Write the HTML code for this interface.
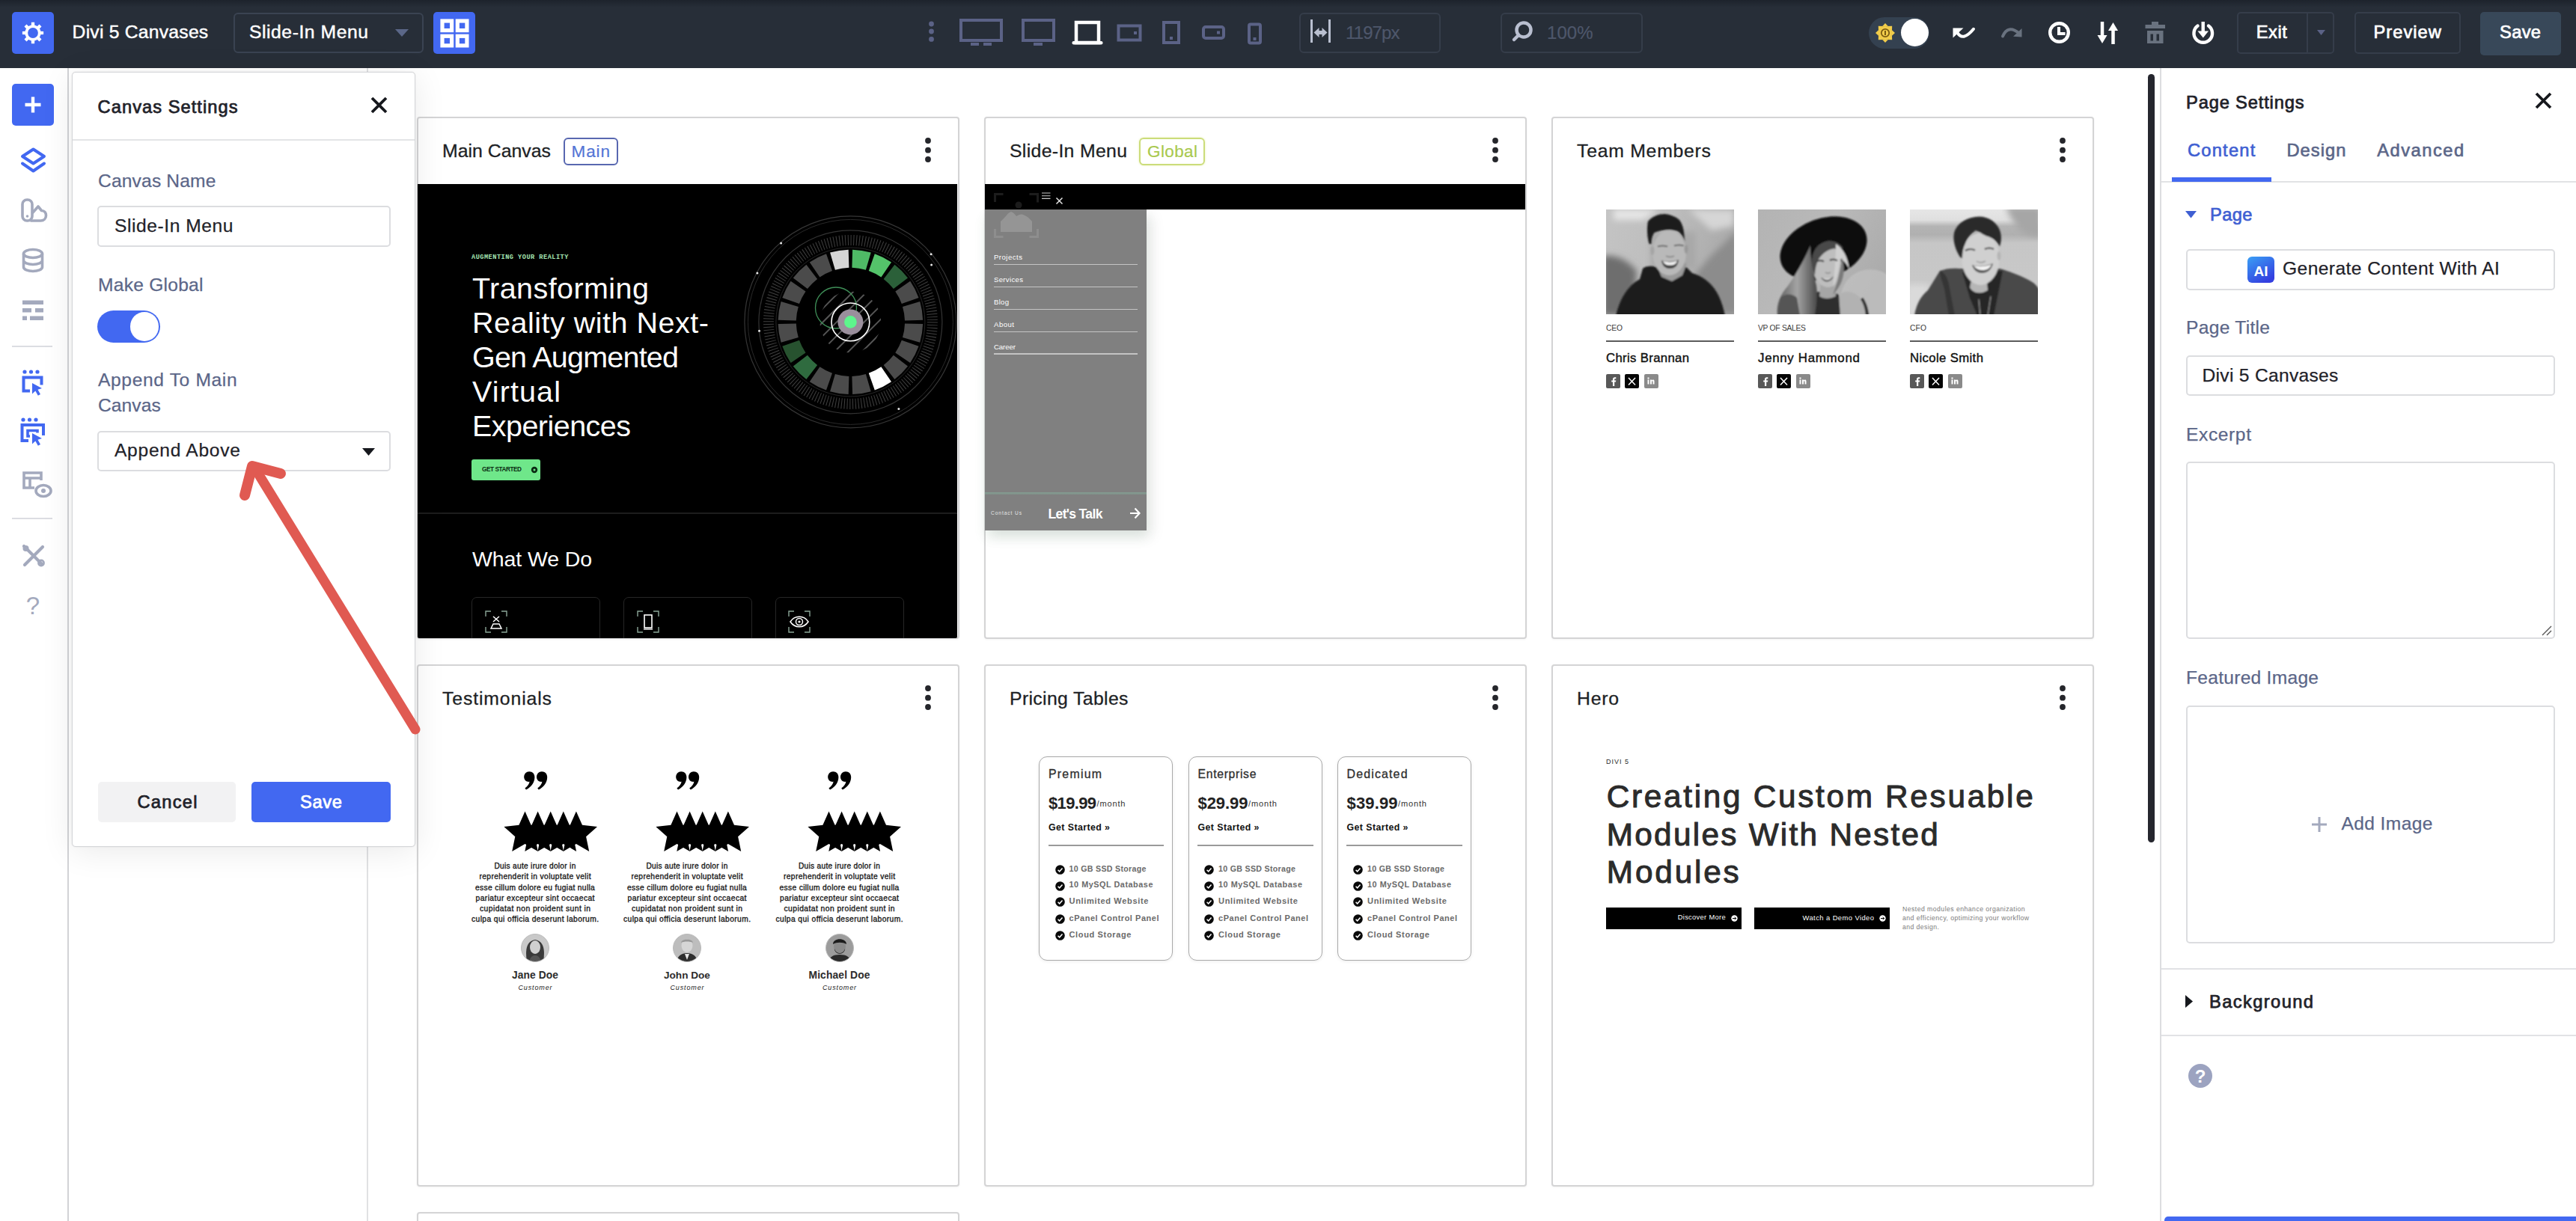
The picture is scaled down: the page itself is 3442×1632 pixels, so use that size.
<!DOCTYPE html>
<html><head><meta charset="utf-8"><title>Divi 5 Canvases</title>
<style>
html,body{margin:0;padding:0;background:#fff;}
body{width:3442px;height:1632px;overflow:hidden;position:relative;font-family:"Liberation Sans",sans-serif;}
.t{position:absolute;white-space:nowrap;line-height:1;}
svg{display:block;overflow:visible;}
</style></head><body>
<!-- p_top -->
<div style="position:absolute;left:0px;top:0px;width:3442px;height:91px;background:#272e38;"></div>
<div style="position:absolute;left:0px;top:0px;width:3442px;height:10px;background:linear-gradient(#1d232c,#272e38);"></div>
<div style="position:absolute;left:16px;top:16px;width:56px;height:56px;background:#4268f1;border-radius:5px;"><svg style="position:absolute;left:0px;top:0px;" width="56" height="56" viewBox="0 0 56 56"><g transform="translate(28,28)"><circle r="10.6" fill="#fff"/><path fill="#fff" fill-rule="evenodd" d="M-2.25,-10.15L-2.11,-14.14L2.11,-14.14L2.25,-10.15L5.59,-8.77L8.51,-11.50L11.50,-8.51L8.77,-5.59L10.15,-2.25L14.14,-2.11L14.14,2.11L10.15,2.25L8.77,5.59L11.50,8.51L8.51,11.50L5.59,8.77L2.25,10.15L2.11,14.14L-2.11,14.14L-2.25,10.15L-5.59,8.77L-8.51,11.50L-11.50,8.51L-8.77,5.59L-10.15,2.25L-14.14,2.11L-14.14,-2.11L-10.15,-2.25L-8.77,-5.59L-11.50,-8.51L-8.51,-11.50L-5.59,-8.77z M0,-6.9a6.9,6.9 0 1 0 0.01,0z"/><circle r="6.9" fill="#4268f1"/></g></svg></div>
<span class="t" style="left:96.6px;top:30.6px;font-size:24.70px;color:#fff;letter-spacing:0.23px;-webkit-text-stroke:0.45px #fff;">Divi 5 Canvases</span>
<div style="position:absolute;left:312px;top:17px;width:254px;height:54px;box-sizing:border-box;border:2px solid #3a4352;border-radius:6px;"></div>
<span class="t" style="left:333.0px;top:30.6px;font-size:24.70px;color:#fff;letter-spacing:0.55px;-webkit-text-stroke:0.45px #fff;">Slide-In Menu</span>
<svg style="position:absolute;left:526px;top:37px;" width="22" height="14" viewBox="0 0 22 14"><path d="M2,2h18l-9,10z" fill="#5b6788"/></svg>
<div style="position:absolute;left:579px;top:16px;width:56px;height:56px;background:#4268f1;border-radius:5px;"><svg style="position:absolute;left:0px;top:0px;" width="56" height="56" viewBox="0 0 56 56"><rect x="12.0" y="12.0" width="12.6" height="12.6" fill="none" stroke="#fff" stroke-width="5.2"/><rect x="32.300000000000004" y="12.0" width="12.6" height="12.6" fill="none" stroke="#fff" stroke-width="5.2"/><rect x="12.0" y="32.300000000000004" width="12.6" height="12.6" fill="none" stroke="#fff" stroke-width="5.2"/><rect x="32.300000000000004" y="32.300000000000004" width="12.6" height="12.6" fill="none" stroke="#fff" stroke-width="5.2"/></svg></div>
<svg style="position:absolute;left:1238px;top:26px;" width="14" height="34" viewBox="0 0 14 34"><circle cx="6.5" cy="6" r="3.4" fill="#5b6286"/><circle cx="6.5" cy="16" r="3.4" fill="#5b6286"/><circle cx="6.5" cy="26.4" r="3.4" fill="#5b6286"/></svg>
<svg style="position:absolute;left:1280px;top:22px;" width="62" height="42" viewBox="0 0 62 42"><rect x="4" y="5" width="54" height="27" fill="none" stroke="#5b6286" stroke-width="4"/><rect x="17" y="35" width="11" height="4" fill="#5b6286"/><rect x="34" y="35" width="11" height="4" fill="#5b6286"/></svg>
<svg style="position:absolute;left:1363px;top:22px;" width="50" height="42" viewBox="0 0 50 42"><rect x="4" y="5" width="41" height="27" fill="none" stroke="#5b6286" stroke-width="4"/><rect x="18" y="35" width="12" height="4" fill="#5b6286"/></svg>
<svg style="position:absolute;left:1430px;top:24px;" width="46" height="38" viewBox="0 0 46 38"><rect x="8" y="6" width="30" height="27" fill="none" stroke="#fff" stroke-width="4.5"/><rect x="2.5" y="31" width="41" height="4.5" rx="2" fill="#fff"/></svg>
<svg style="position:absolute;left:1490px;top:30px;" width="40" height="28" viewBox="0 0 40 28"><rect x="4.5" y="4.5" width="29" height="19" fill="none" stroke="#5b6286" stroke-width="4"/><rect x="25" y="12" width="4" height="4" fill="#5b6286"/></svg>
<svg style="position:absolute;left:1550px;top:26px;" width="32" height="36" viewBox="0 0 32 36"><rect x="5" y="4" width="20" height="27" fill="none" stroke="#5b6286" stroke-width="4"/><rect x="13" y="23" width="4" height="4" fill="#5b6286"/></svg>
<svg style="position:absolute;left:1603px;top:31px;" width="38" height="26" viewBox="0 0 38 26"><rect x="5" y="5" width="27" height="15" rx="3" fill="none" stroke="#5b6286" stroke-width="4"/><rect x="23" y="10.5" width="4" height="4" fill="#5b6286"/></svg>
<svg style="position:absolute;left:1663px;top:28px;" width="28" height="34" viewBox="0 0 28 34"><rect x="6" y="4.5" width="15" height="25" rx="2" fill="none" stroke="#5b6286" stroke-width="4"/><rect x="11.5" y="22" width="4" height="4" fill="#5b6286"/></svg>
<div style="position:absolute;left:1736px;top:17px;width:189px;height:54px;box-sizing:border-box;border:2px solid #353d4a;border-radius:6px;"></div>
<svg style="position:absolute;left:1749px;top:28px;" width="32" height="32" viewBox="0 0 32 32"><rect x="2" y="-2" width="3" height="31" fill="#b9bfd0"/><rect x="26" y="-2" width="3" height="31" fill="#b9bfd0"/><path d="M6.5,15.5l7,-6.5v4h4v-4l7,6.5l-7,6.5v-4h-4v4z" fill="#b9bfd0"/></svg>
<span class="t" style="left:1798.0px;top:31.8px;font-size:24.00px;color:#4e576b;letter-spacing:-0.89px;-webkit-text-stroke:0.2px #4e576b;">1197px</span>
<div style="position:absolute;left:2005px;top:17px;width:190px;height:54px;box-sizing:border-box;border:2px solid #353d4a;border-radius:6px;"></div>
<svg style="position:absolute;left:2018px;top:26px;" width="34" height="34" viewBox="0 0 34 34"><circle cx="18" cy="14" r="9.5" fill="none" stroke="#b9bfd0" stroke-width="4.5"/><path d="M11,21l-6,6" stroke="#b9bfd0" stroke-width="4.5" stroke-linecap="round"/></svg>
<span class="t" style="left:2067.0px;top:31.8px;font-size:24.00px;color:#4e576b;letter-spacing:0.07px;-webkit-text-stroke:0.2px #4e576b;">100%</span>
<div style="position:absolute;left:2497px;top:23px;width:81px;height:42px;background:#344150;border-radius:21px;"></div>
<svg style="position:absolute;left:2506px;top:31px;" width="26" height="26" viewBox="0 0 26 26"><g transform="translate(13,13)"><path d="M-4.5,-8.2L0,-13L4.5,-8.2z" fill="#f2cd4a" transform="rotate(0)"/><path d="M-4.5,-8.2L0,-13L4.5,-8.2z" fill="#f2cd4a" transform="rotate(45)"/><path d="M-4.5,-8.2L0,-13L4.5,-8.2z" fill="#f2cd4a" transform="rotate(90)"/><path d="M-4.5,-8.2L0,-13L4.5,-8.2z" fill="#f2cd4a" transform="rotate(135)"/><path d="M-4.5,-8.2L0,-13L4.5,-8.2z" fill="#f2cd4a" transform="rotate(180)"/><path d="M-4.5,-8.2L0,-13L4.5,-8.2z" fill="#f2cd4a" transform="rotate(225)"/><path d="M-4.5,-8.2L0,-13L4.5,-8.2z" fill="#f2cd4a" transform="rotate(270)"/><path d="M-4.5,-8.2L0,-13L4.5,-8.2z" fill="#f2cd4a" transform="rotate(315)"/><circle r="9" fill="#f2cd4a"/><circle r="5.2" fill="none" stroke="#7a5b12" stroke-width="1.8"/><rect x="-1" y="-3" width="2" height="6" fill="#7a5b12"/></g></svg>
<div style="position:absolute;left:2540px;top:25px;width:37px;height:37px;background:#fff;border-radius:50%;"></div>
<svg style="position:absolute;left:2606px;top:28px;" width="36" height="30" viewBox="0 0 36 30"><path d="M3.5,9.5h14l-14,13z" fill="#fff"/><path d="M9,15Q16.5,28.5 31,10.8" fill="none" stroke="#fff" stroke-width="4" stroke-linecap="round"/></svg>
<svg style="position:absolute;left:2671px;top:30px;" width="36" height="28" viewBox="0 0 36 28"><path d="M30.5,8v11.5l-11.5,-0.8z" fill="#69727f"/><path d="M5,18.5Q12,2.5 27,14.500" fill="none" stroke="#69727f" stroke-width="4" stroke-linecap="round"/></svg>
<svg style="position:absolute;left:2734px;top:26px;" width="36" height="36" viewBox="0 0 36 36"><circle cx="17.5" cy="17.5" r="12.3" fill="none" stroke="#fff" stroke-width="4.4"/><path d="M17,10v9h8.5" fill="none" stroke="#fff" stroke-width="4"/></svg>
<svg style="position:absolute;left:2799px;top:26px;" width="36" height="36" viewBox="0 0 36 36"><path d="M10,3v20" stroke="#fff" stroke-width="4.5"/><path d="M3.5,21h13l-6.5,11z" fill="#fff"/><path d="M24.5,33v-20" stroke="#fff" stroke-width="4.5"/><path d="M18,15h13l-6.5,-11z" fill="#fff"/></svg>
<svg style="position:absolute;left:2863px;top:26px;" width="34" height="36" viewBox="0 0 34 36"><rect x="12" y="3" width="9" height="4" fill="#69727f"/><rect x="3.5" y="7" width="26.5" height="5" fill="#69727f"/><path d="M6,15h21.5v17h-21.5z M10.5,19.5v9h3.5v-9z M18.5,19.5v9h3.5v-9z" fill="#69727f" fill-rule="evenodd"/></svg>
<svg style="position:absolute;left:2926px;top:26px;" width="36" height="36" viewBox="0 0 36 36"><path d="M10.5,8.5a12.3,12.3 0 1 0 14.5,0" fill="none" stroke="#fff" stroke-width="4.4" stroke-linecap="round"/><path d="M17.7,3v15" stroke="#fff" stroke-width="4.4"/><path d="M10.5,15.5h14.5l-7.2,9z" fill="#fff"/></svg>
<div style="position:absolute;left:2989px;top:16px;width:130px;height:56px;box-sizing:border-box;border:2px solid #353d4a;border-radius:5px;"></div>
<div style="position:absolute;left:3082px;top:17px;width:2px;height:54px;background:#353d4a;"></div>
<span class="t" style="left:3014.8px;top:32.3px;font-size:23.70px;color:#fff;letter-spacing:0.50px;-webkit-text-stroke:0.7px #fff;">Exit</span>
<svg style="position:absolute;left:3094px;top:38px;" width="16" height="12" viewBox="0 0 16 12"><path d="M2,2h11l-5.5,7z" fill="#5b6286"/></svg>
<div style="position:absolute;left:3146px;top:16px;width:142px;height:56px;box-sizing:border-box;border:2px solid #353d4a;border-radius:5px;"></div>
<span class="t" style="left:3171.4px;top:32.3px;font-size:23.70px;color:#fff;letter-spacing:1.05px;-webkit-text-stroke:0.7px #fff;">Preview</span>
<div style="position:absolute;left:3314px;top:16px;width:108px;height:58px;background:#384859;border-radius:5px;"></div>
<span class="t" style="left:3340.0px;top:32.3px;font-size:23.70px;color:#fff;letter-spacing:0.33px;-webkit-text-stroke:0.7px #fff;">Save</span>
<!-- p_cards -->
<div style="position:absolute;left:556.5px;top:156.3px;width:725px;height:698.2px;box-sizing:border-box;border:2px solid #d4d4d5;border-radius:4px;background:#fff;box-shadow:0 1px 3px rgba(0,0,0,.05);"></div>
<span class="t" style="left:591.0px;top:189.9px;font-size:24.80px;color:#1d1f25;letter-spacing:0.03px;-webkit-text-stroke:0.3px #1d1f25;">Main Canvas</span>
<svg style="position:absolute;left:1234px;top:182px;" width="12" height="38" viewBox="0 0 12 38"><circle cx="6" cy="6" r="3.9" fill="#25262b"/><circle cx="6" cy="18.7" r="3.9" fill="#25262b"/><circle cx="6" cy="31" r="3.9" fill="#25262b"/></svg>
<div style="position:absolute;left:1314.5px;top:156.3px;width:725px;height:698.2px;box-sizing:border-box;border:2px solid #d4d4d5;border-radius:4px;background:#fff;box-shadow:0 1px 3px rgba(0,0,0,.05);"></div>
<span class="t" style="left:1349.0px;top:189.9px;font-size:24.80px;color:#1d1f25;letter-spacing:0.33px;-webkit-text-stroke:0.3px #1d1f25;">Slide-In Menu</span>
<svg style="position:absolute;left:1992px;top:182px;" width="12" height="38" viewBox="0 0 12 38"><circle cx="6" cy="6" r="3.9" fill="#25262b"/><circle cx="6" cy="18.7" r="3.9" fill="#25262b"/><circle cx="6" cy="31" r="3.9" fill="#25262b"/></svg>
<div style="position:absolute;left:2072.5px;top:156.3px;width:725px;height:698.2px;box-sizing:border-box;border:2px solid #d4d4d5;border-radius:4px;background:#fff;box-shadow:0 1px 3px rgba(0,0,0,.05);"></div>
<span class="t" style="left:2107.0px;top:189.9px;font-size:24.80px;color:#1d1f25;letter-spacing:0.74px;-webkit-text-stroke:0.3px #1d1f25;">Team Members</span>
<svg style="position:absolute;left:2750px;top:182px;" width="12" height="38" viewBox="0 0 12 38"><circle cx="6" cy="6" r="3.9" fill="#25262b"/><circle cx="6" cy="18.7" r="3.9" fill="#25262b"/><circle cx="6" cy="31" r="3.9" fill="#25262b"/></svg>
<div style="position:absolute;left:556.5px;top:888.3px;width:725px;height:698.2px;box-sizing:border-box;border:2px solid #d4d4d5;border-radius:4px;background:#fff;box-shadow:0 1px 3px rgba(0,0,0,.05);"></div>
<span class="t" style="left:591.0px;top:921.9px;font-size:24.80px;color:#1d1f25;letter-spacing:0.87px;-webkit-text-stroke:0.3px #1d1f25;">Testimonials</span>
<svg style="position:absolute;left:1234px;top:914px;" width="12" height="38" viewBox="0 0 12 38"><circle cx="6" cy="6" r="3.9" fill="#25262b"/><circle cx="6" cy="18.7" r="3.9" fill="#25262b"/><circle cx="6" cy="31" r="3.9" fill="#25262b"/></svg>
<div style="position:absolute;left:1314.5px;top:888.3px;width:725px;height:698.2px;box-sizing:border-box;border:2px solid #d4d4d5;border-radius:4px;background:#fff;box-shadow:0 1px 3px rgba(0,0,0,.05);"></div>
<span class="t" style="left:1349.0px;top:921.9px;font-size:24.80px;color:#1d1f25;letter-spacing:0.35px;-webkit-text-stroke:0.3px #1d1f25;">Pricing Tables</span>
<svg style="position:absolute;left:1992px;top:914px;" width="12" height="38" viewBox="0 0 12 38"><circle cx="6" cy="6" r="3.9" fill="#25262b"/><circle cx="6" cy="18.7" r="3.9" fill="#25262b"/><circle cx="6" cy="31" r="3.9" fill="#25262b"/></svg>
<div style="position:absolute;left:2072.5px;top:888.3px;width:725px;height:698.2px;box-sizing:border-box;border:2px solid #d4d4d5;border-radius:4px;background:#fff;box-shadow:0 1px 3px rgba(0,0,0,.05);"></div>
<span class="t" style="left:2107.0px;top:921.9px;font-size:24.80px;color:#1d1f25;letter-spacing:0.75px;-webkit-text-stroke:0.3px #1d1f25;">Hero</span>
<svg style="position:absolute;left:2750px;top:914px;" width="12" height="38" viewBox="0 0 12 38"><circle cx="6" cy="6" r="3.9" fill="#25262b"/><circle cx="6" cy="18.7" r="3.9" fill="#25262b"/><circle cx="6" cy="31" r="3.9" fill="#25262b"/></svg>
<div style="position:absolute;left:556.5px;top:1620.3px;width:725px;height:41.2px;box-sizing:border-box;border:2px solid #d4d4d5;border-radius:4px;background:#fff;box-shadow:0 1px 3px rgba(0,0,0,.05);"></div>
<div style="position:absolute;left:753px;top:183.5px;width:73px;height:37px;box-sizing:border-box;border:2px solid #5867b0;border-radius:6px;"></div>
<span class="t" style="left:763.5px;top:191.9px;font-size:22.50px;color:#5375d6;letter-spacing:0.91px;-webkit-text-stroke:0.2px #5375d6;">Main</span>
<div style="position:absolute;left:1522px;top:183.5px;width:88px;height:37px;box-sizing:border-box;border:2px solid #cbdc7a;border-radius:6px;box-shadow:0 0 3px #e8f0b0;"></div>
<span class="t" style="left:1533.0px;top:191.9px;font-size:22.50px;color:#a9c94e;letter-spacing:0.39px;-webkit-text-stroke:0.2px #a9c94e;">Global</span>
<div style="position:absolute;left:558px;top:246px;width:721.2px;height:606.8px;background:#000;overflow:hidden;border-radius:0 0 2px 2px;"><svg style="position:absolute;left:0px;top:0px;" width="722" height="608" viewBox="0 0 722 608"><circle cx="578.4" cy="184.4" r="141.5" fill="none" stroke="#363636" stroke-width="1.2"/><circle cx="578.4" cy="184.4" r="137" fill="none" stroke="#2a2a2a" stroke-width="1"/><circle cx="578.4" cy="184.4" r="122.5" fill="none" stroke="#343434" stroke-width="1.2"/><circle cx="578.4" cy="184.4" r="99.5" fill="none" stroke="#262626" stroke-width="1"/><circle cx="578.4" cy="184.4" r="109.5" fill="none" stroke="#404040" stroke-width="14" stroke-dasharray="1 2.82"/><path d="M581.1,87.7A96.7,96.7 0 0 1 605.7,91.6L598.9,114.8A72.6,72.6 0 0 0 580.4,111.8z" fill="#4fba66"/><path d="M610.8,93.3A96.7,96.7 0 0 1 633.0,104.6L619.4,124.5A72.6,72.6 0 0 0 602.8,116.0z" fill="#54c36a"/><path d="M637.4,107.8A96.7,96.7 0 0 1 655.0,125.4L635.9,140.1A72.6,72.6 0 0 0 622.7,126.9z" fill="#2b6039"/><path d="M658.2,129.8A96.7,96.7 0 0 1 669.5,152.0L646.8,160.0A72.6,72.6 0 0 0 638.3,143.4z" fill="#4b4b4b"/><path d="M671.2,157.1A96.7,96.7 0 0 1 675.1,181.7L651.0,182.4A72.6,72.6 0 0 0 648.0,163.9z" fill="#4b4b4b"/><path d="M675.1,187.1A96.7,96.7 0 0 1 671.2,211.7L648.0,204.9A72.6,72.6 0 0 0 651.0,186.4z" fill="#4b4b4b"/><path d="M669.5,216.8A96.7,96.7 0 0 1 658.2,239.0L638.3,225.4A72.6,72.6 0 0 0 646.8,208.8z" fill="#4b4b4b"/><path d="M655.0,243.4A96.7,96.7 0 0 1 637.4,261.0L622.7,241.9A72.6,72.6 0 0 0 635.9,228.7z" fill="#4b4b4b"/><path d="M633.0,264.2A96.7,96.7 0 0 1 610.8,275.5L602.8,252.8A72.6,72.6 0 0 0 619.4,244.3z" fill="#ffffff"/><path d="M605.7,277.2A96.7,96.7 0 0 1 581.1,281.1L580.4,257.0A72.6,72.6 0 0 0 598.9,254.0z" fill="#4b4b4b"/><path d="M575.7,281.1A96.7,96.7 0 0 1 551.1,277.2L557.9,254.0A72.6,72.6 0 0 0 576.4,257.0z" fill="#4b4b4b"/><path d="M546.0,275.5A96.7,96.7 0 0 1 523.8,264.2L537.4,244.3A72.6,72.6 0 0 0 554.0,252.8z" fill="#4b4b4b"/><path d="M519.4,261.0A96.7,96.7 0 0 1 501.8,243.4L520.9,228.7A72.6,72.6 0 0 0 534.1,241.9z" fill="#2f6b3f"/><path d="M498.6,239.0A96.7,96.7 0 0 1 487.3,216.8L510.0,208.8A72.6,72.6 0 0 0 518.5,225.4z" fill="#27522f"/><path d="M485.6,211.7A96.7,96.7 0 0 1 481.7,187.1L505.8,186.4A72.6,72.6 0 0 0 508.8,204.9z" fill="#4b4b4b"/><path d="M481.7,181.7A96.7,96.7 0 0 1 485.6,157.1L508.8,163.9A72.6,72.6 0 0 0 505.8,182.4z" fill="#4b4b4b"/><path d="M487.3,152.0A96.7,96.7 0 0 1 498.6,129.8L518.5,143.4A72.6,72.6 0 0 0 510.0,160.0z" fill="#4b4b4b"/><path d="M501.8,125.4A96.7,96.7 0 0 1 519.4,107.8L534.1,126.9A72.6,72.6 0 0 0 520.9,140.1z" fill="#4b4b4b"/><path d="M523.8,104.6A96.7,96.7 0 0 1 546.0,93.3L554.0,116.0A72.6,72.6 0 0 0 537.4,124.5z" fill="#4b4b4b"/><path d="M551.1,91.6A96.7,96.7 0 0 1 575.7,87.7L576.4,111.8A72.6,72.6 0 0 0 557.9,114.8z" fill="#d6d6d6"/><defs><clipPath id="hc"><circle cx="578.4" cy="184.4" r="41"/></clipPath></defs><g clip-path="url(#hc)" stroke="#555" stroke-width="2"><path d="M454.0,180.0L574.0,60.0"/><path d="M463.2,189.2L583.2,69.2"/><path d="M472.4,198.4L592.4,78.4"/><path d="M481.6,207.6L601.6,87.6"/><path d="M490.8,216.8L610.8,96.8"/><path d="M500.0,226.0L620.0,106.0"/><path d="M509.2,235.2L629.2,115.2"/><path d="M518.4,244.4L638.4,124.4"/><path d="M527.6,253.6L647.6,133.6"/><path d="M536.8,262.8L656.8,142.8"/><path d="M546.0,272.0L666.0,152.0"/><path d="M555.2,281.2L675.2,161.2"/><path d="M564.4,290.4L684.4,170.4"/><path d="M573.6,299.6L693.6,179.6"/><path d="M582.8,308.8L702.8,188.8"/></g><circle cx="559.0" cy="165.5" r="27.5" fill="none" stroke="#3f8f58" stroke-width="1.3"/><circle cx="578.4" cy="184.4" r="17" fill="#9a8f9c"/><circle cx="578.4" cy="184.4" r="8.3" fill="#5df58c"/><circle cx="578.4" cy="184.4" r="25.4" fill="none" stroke="#fff" stroke-width="1.6"/><circle cx="485.59999999999997" cy="79.10000000000001" r="1.5" fill="#e8e8e8"/><circle cx="453.9" cy="118.9" r="1.5" fill="#e8e8e8"/><circle cx="456.5" cy="196.20000000000002" r="1.5" fill="#e8e8e8"/><circle cx="686.1" cy="93.7" r="1.5" fill="#e8e8e8"/><circle cx="686.6" cy="107.9" r="1.5" fill="#e8e8e8"/><circle cx="642.9" cy="300.5" r="1.5" fill="#e8e8e8"/></svg><span class="t" style="left:72.0px;top:94.0px;font-size:8.60px;color:#a4e6b2;font-family:'Liberation Mono', monospace;font-weight:700;letter-spacing:0.49px;">AUGMENTING YOUR REALITY</span><span class="t" style="left:73.0px;top:120.4px;font-size:39.50px;color:#fff;letter-spacing:0.43px;">Transforming</span><span class="t" style="left:73.0px;top:166.3px;font-size:39.50px;color:#fff;letter-spacing:0.51px;">Reality with Next-</span><span class="t" style="left:73.0px;top:212.2px;font-size:39.50px;color:#fff;letter-spacing:-0.79px;">Gen Augmented</span><span class="t" style="left:73.0px;top:258.1px;font-size:39.50px;color:#fff;letter-spacing:1.12px;">Virtual</span><span class="t" style="left:73.0px;top:304.0px;font-size:39.50px;color:#fff;letter-spacing:-0.54px;">Experiences</span><div style="position:absolute;left:72px;top:367.5px;width:92px;height:28.5px;background:#6fe78a;border-radius:3px;"></div><span class="t" style="left:86.0px;top:378.0px;font-size:8.20px;color:#0a2a12;font-weight:700;letter-spacing:-0.42px;">GET STARTED</span><svg style="position:absolute;left:150.5px;top:376.5px;" width="10" height="10" viewBox="0 0 10 10"><circle cx="5" cy="5" r="4.2" fill="#0a2a12"/><circle cx="5" cy="5" r="1.5" fill="#6fe78a"/></svg><div style="position:absolute;left:0px;top:439px;width:722px;height:1.5px;background:#1d1d1d;"></div><span class="t" style="left:73.0px;top:486.8px;font-size:28.50px;color:#fff;letter-spacing:-0.11px;">What We Do</span><div style="position:absolute;left:72px;top:551.5px;width:172px;height:80px;box-sizing:border-box;border:1.5px solid #262626;border-radius:7px;"></div><svg style="position:absolute;left:89.5px;top:570px;" width="30" height="30" viewBox="0 0 30 30"><path d="M1,8v-7h7M22,1h7v7M29,22v7h-7M8,29h-7v-7" fill="none" stroke="#8ba698" stroke-width="1.4"/></svg><div style="position:absolute;left:275px;top:551.5px;width:172px;height:80px;box-sizing:border-box;border:1.5px solid #262626;border-radius:7px;"></div><svg style="position:absolute;left:292.5px;top:570px;" width="30" height="30" viewBox="0 0 30 30"><path d="M1,8v-7h7M22,1h7v7M29,22v7h-7M8,29h-7v-7" fill="none" stroke="#8ba698" stroke-width="1.4"/></svg><div style="position:absolute;left:477.5px;top:551.5px;width:172px;height:80px;box-sizing:border-box;border:1.5px solid #262626;border-radius:7px;"></div><svg style="position:absolute;left:495.0px;top:570px;" width="30" height="30" viewBox="0 0 30 30"><path d="M1,8v-7h7M22,1h7v7M29,22v7h-7M8,29h-7v-7" fill="none" stroke="#8ba698" stroke-width="1.4"/></svg><svg style="position:absolute;left:89.5px;top:570px;" width="30" height="30" viewBox="0 0 30 30"><path d="M11,8l8,7M19,8l-8,7M8,24l3,-6h8l3,6z" fill="none" stroke="#fff" stroke-width="1.5"/></svg><svg style="position:absolute;left:292.5px;top:570px;" width="30" height="30" viewBox="0 0 30 30"><rect x="10" y="6" width="10" height="17" fill="none" stroke="#fff" stroke-width="1.6"/><path d="M9,25h12" stroke="#fff" stroke-width="1.4"/></svg><svg style="position:absolute;left:495px;top:570px;" width="30" height="30" viewBox="0 0 30 30"><path d="M3,15c6,-9 18,-9 24,0c-6,9 -18,9 -24,0z" fill="none" stroke="#fff" stroke-width="1.6"/><circle cx="15" cy="15" r="4.5" fill="none" stroke="#fff" stroke-width="1.5"/><circle cx="15" cy="15" r="1.6" fill="#fff"/></svg></div>
<div style="position:absolute;left:1316px;top:246px;width:722px;height:34px;background:#000;"></div>
<div style="position:absolute;left:1316px;top:280px;width:215.5px;height:429px;background:#808080;box-shadow:6px 8px 18px rgba(0,0,0,.10),0 10px 14px rgba(120,190,140,.10);"></div>
<svg style="position:absolute;left:1328px;top:258px;" width="62" height="62" viewBox="0 0 62 62"><path d="M1.5,12v-10.5h11M47.5,1.5h11v11" fill="none" stroke="#1d1d1d" stroke-width="3"/><path d="M58.5,48v10.5h-11M12.5,58.5h-11v-10.5" fill="none" stroke="#8e8e8e" stroke-width="3"/><circle cx="33" cy="16" r="4.5" fill="#1c1c1c"/><path d="M9,52v-14c3,-3 5,-5 7,-7c2,-3 4,-5 7,-6c3,1 5,3 7,6c3,-2 6,-3 9,-2c4,1 8,4 12,9v14z" fill="#959595"/></svg>
<svg style="position:absolute;left:1391px;top:256px;" width="14" height="12" viewBox="0 0 14 12"><path d="M1,2h11.5M1,5.7h11.5M1,9.4h11.5" stroke="#c8c8c8" stroke-width="1.1"/></svg>
<svg style="position:absolute;left:1410px;top:263px;" width="12" height="12" viewBox="0 0 12 12"><path d="M1.5,1.5l8,8M9.5,1.5l-8,8" stroke="#e6e6e6" stroke-width="1.5"/></svg>
<span class="t" style="left:1328.0px;top:339.0px;font-size:9.60px;color:#fff;letter-spacing:0.47px;">Projects</span>
<div style="position:absolute;left:1328px;top:352.8px;width:191.5px;height:1.4px;background:#c4c4c4;"></div>
<span class="t" style="left:1328.0px;top:368.9px;font-size:9.60px;color:#fff;letter-spacing:0.31px;">Services</span>
<div style="position:absolute;left:1328px;top:382.7px;width:191.5px;height:1.4px;background:#c4c4c4;"></div>
<span class="t" style="left:1328.0px;top:398.8px;font-size:9.60px;color:#fff;letter-spacing:0.26px;">Blog</span>
<div style="position:absolute;left:1328px;top:412.6px;width:191.5px;height:1.4px;background:#c4c4c4;"></div>
<span class="t" style="left:1328.0px;top:428.7px;font-size:9.60px;color:#fff;letter-spacing:0.48px;">About</span>
<div style="position:absolute;left:1328px;top:442.5px;width:191.5px;height:1.4px;background:#c4c4c4;"></div>
<span class="t" style="left:1328.0px;top:458.6px;font-size:9.60px;color:#fff;letter-spacing:-0.07px;">Career</span>
<div style="position:absolute;left:1328px;top:472.40000000000003px;width:191.5px;height:1.4px;background:#c4c4c4;"></div>
<div style="position:absolute;left:1316px;top:657.5px;width:215.5px;height:3.5px;background:linear-gradient(#84a496,#809088);opacity:.85;"></div>
<span class="t" style="left:1324.0px;top:682.7px;font-size:6.60px;color:#e6e6e6;letter-spacing:0.93px;">Contact Us</span>
<span class="t" style="left:1400.5px;top:678.8px;font-size:17.60px;color:#fff;font-weight:700;letter-spacing:-0.69px;">Let's Talk</span>
<svg style="position:absolute;left:1508px;top:677px;" width="18" height="18" viewBox="0 0 18 18"><path d="M2,9h12M8.5,2.5l6,6.5l-6,6.5" fill="none" stroke="#fff" stroke-width="2.2"/></svg>
<svg style="position:absolute;left:2146px;top:280px;" width="171" height="140" viewBox="0 0 171 140"><defs><linearGradient id="p1g" x1="0" y1="0" x2="1" y2="0.25"><stop offset="0" stop-color="#c4c4c4"/><stop offset="0.5" stop-color="#bdbdbd"/><stop offset="1" stop-color="#a9a9a9"/></linearGradient><filter id="bl1" x="-10%" y="-10%" width="120%" height="120%"><feGaussianBlur stdDeviation="1.3"/></filter><filter id="bl1b"><feGaussianBlur stdDeviation="4"/></filter><clipPath id="c1"><rect width="171" height="140"/></clipPath></defs><g clip-path="url(#c1)"><rect width="171" height="140" fill="url(#p1g)"/><g filter="url(#bl1b)"><path d="M10,0h60l-20,14h-40z" fill="#e6e6e6"/><path d="M110,0h61v22l-30,6z" fill="#d6d6d6"/><path d="M-5,62c20,-2 34,6 46,20l-4,60h-42z" fill="#6e6e6e"/><path d="M176,28l-36,34l-22,26l20,52h40z" fill="#8c8c8c"/><path d="M60,30h60v50h-60z" fill="#a8a8a8"/></g><g filter="url(#bl1)"><path d="M13,142c6,-24 16,-40 32,-49l4,-14c4,-4 12,-4 18,-2h40l8,8c26,8 38,28 44,57z" fill="#1d1d1d"/><path d="M66,70l8,20l14,6l14,-8l6,-16z" fill="#9a9a9a"/><ellipse cx="84.500" cy="58" rx="22.500" ry="30" fill="#b9b9b9"/><ellipse cx="62" cy="55" rx="2.500" ry="6" fill="#a5a5a5"/><ellipse cx="107" cy="53" rx="2.500" ry="6" fill="#999"/><path d="M57.500,46c-3,-12 -3,-22 -1.500,-30c6,-7 14,-10 22.700,-10c8,1 15,4 19.700,8.400c4,6 6,14 6.100,22.600l1,6c-3,-8 -6,-12 -10,-14c-10,-3 -22,-2 -31,2c-3,4 -4,9 -4,15z" fill="#1a1a1a"/><path d="M69,49.500c4,-1.200 9,-1.200 13,0M91,48.500c4,-1.200 9,-1.200 12.500,0" stroke="#444" stroke-width="1.600" fill="none"/><path d="M80,62c3,2 8,2 11,0" stroke="#777" stroke-width="1.500" fill="none"/><path d="M74,68c7,2.500 16,2.500 23,-1c-1,9 -6,12 -12,12c-6,0 -10,-4 -11,-11z" fill="#3c3c3c"/><path d="M76,69c6,2 13,2 19,-0.500c-1,4 -4,6 -9.500,6c-5,0 -8.500,-2 -9.500,-5.500z" fill="#f4f4f4"/></g></g></svg>
<span class="t" style="left:2146.0px;top:433.9px;font-size:10.30px;color:#3c3c3c;letter-spacing:-0.16px;">CEO</span>
<div style="position:absolute;left:2146px;top:454.5px;width:171px;height:2px;background:#5c5c5c;"></div>
<span class="t" style="left:2146.0px;top:470.8px;font-size:16.69px;color:#111;letter-spacing:0.36px;-webkit-text-stroke:0.4px #111;">Chris Brannan</span>
<div style="position:absolute;left:2146px;top:500px;width:19px;height:18.5px;background:#585858;border-radius:2px;"><svg style="position:absolute;left:5.5px;top:3.5px;" width="8" height="12" viewBox="0 0 8 12"><path d="M5.2,12v-5.4h1.8l.3,-2.1h-2.1v-1.3c0,-.6 .2,-1 1,-1h1.1v-1.9c-.2,0 -.8,-.1 -1.6,-.1c-1.6,0 -2.7,1 -2.7,2.800v1.5h-1.800v2.1h1.800v5.400z" fill="#fff"/></svg></div>
<div style="position:absolute;left:2171px;top:500px;width:19px;height:18.5px;background:#050505;border-radius:2px;"><svg style="position:absolute;left:4px;top:3.5px;" width="11" height="11" viewBox="0 0 11 11"><path d="M1,1l9,9.500M10,1l-9,9.500" stroke="#fff" stroke-width="1.5" fill="none"/></svg></div>
<div style="position:absolute;left:2196.5px;top:500px;width:19px;height:18.5px;background:#8a8a8a;border-radius:2px;"><svg style="position:absolute;left:4.5px;top:4px;" width="10" height="10" viewBox="0 0 10 10"><rect x="0.500" y="3.500" width="2" height="6" fill="#fff"/><rect x="0.500" y="0.500" width="2" height="2" fill="#fff"/><path d="M4,3.500h2v1c.8,-1.500 3.500,-1.500 3.500,1v4h-2v-3.500c0,-1 -1.500,-1 -1.500,0v3.500h-2z" fill="#fff"/></svg></div>
<svg style="position:absolute;left:2349px;top:280px;" width="171" height="140" viewBox="0 0 171 140"><defs><linearGradient id="p2g" x1="0" y1="0" x2="1" y2="0.5"><stop offset="0" stop-color="#b3b3b3"/><stop offset="0.5" stop-color="#b9b9b9"/><stop offset="1" stop-color="#acacac"/></linearGradient><filter id="bl2" x="-10%" y="-10%" width="120%" height="120%"><feGaussianBlur stdDeviation="1.200"/></filter><clipPath id="c2"><rect width="171" height="140"/></clipPath><linearGradient id="h2" x1="0" y1="0" x2="1" y2="0"><stop offset="0" stop-color="#5a5a5a"/><stop offset="0.5" stop-color="#a4a4a4"/><stop offset="1" stop-color="#4a4a4a"/></linearGradient></defs><g clip-path="url(#c2)"><rect width="171" height="140" fill="url(#p2g)"/><ellipse cx="150" cy="120" rx="40" ry="40" fill="#c6c6c6" filter="url(#bl2)" opacity=".6"/><g filter="url(#bl2)"><ellipse cx="87.500" cy="52" rx="60" ry="40" fill="#0b0b0b" transform="rotate(-20 87.500 52)"/><path d="M110,112c14,-6 30,0 38,30h-46z" fill="#b2b2b2"/><path d="M140,118c4,6 7,14 8,24h-4c-1,-10 -3,-16 -7,-22z" fill="#2a2a2a"/><path d="M74,112c8,-4 24,-2 34,2l2,28h-44z" fill="#2e2e2e"/><path d="M84,100h18l2,16c-8,4 -16,4 -22,0z" fill="#a6a6a6"/><path d="M70,48c-6,14 -16,34 -30,54c-10,12 -16,24 -14,40h50c2,-14 4,-26 2,-40c-4,-18 -8,-36 -8,-54z" fill="url(#h2)"/><path d="M30,118c6,-6 16,-6 22,0l4,24h-30z" fill="#555"/><ellipse cx="92" cy="75" rx="19.500" ry="29" fill="#bebebe" transform="rotate(-5 92 75)"/><path d="M72,66c2,-14 10,-22 22,-24c10,0 16,4 20,10c-12,-2 -26,2 -34,16c-2,6 -4,12 -4,20c-3,-6 -5,-14 -4,-22z" fill="#4a4a4a"/><path d="M104,46c10,6 16,18 18,34c-4,-8 -8,-12 -12,-14c-2,14 -4,26 -10,38c2,-18 4,-38 4,-58z" fill="#d0d0d0"/><path d="M112,64c4,10 4,24 -2,36c-2,4 -6,10 -10,14c6,-16 10,-32 12,-50z" fill="#7a7a7a"/><path d="M78,69.500c3,-1.600 7,-1.600 10,0M96,68c3,-1.600 7,-1.600 10,0.500" stroke="#333" stroke-width="2" fill="none"/><path d="M90,84c2,1.500 5,1.500 7,0" stroke="#888" stroke-width="1.500" fill="none"/><path d="M84,91c6,2 12,1.500 17,-1.500c-2,5 -6,7 -9,7c-3,0 -6,-2 -8,-5.500z" fill="#5a5a5a"/><path d="M86,91.500c4,1.200 9,1 13,-1c-2,2.500 -5,3.500 -7,3.500c-2,0 -4,-1 -6,-2.500z" fill="#eee"/></g></g></svg>
<span class="t" style="left:2349.0px;top:433.9px;font-size:10.30px;color:#3c3c3c;letter-spacing:-0.28px;">VP OF SALES</span>
<div style="position:absolute;left:2349px;top:454.5px;width:171px;height:2px;background:#5c5c5c;"></div>
<span class="t" style="left:2349.0px;top:470.7px;font-size:16.88px;color:#111;letter-spacing:0.70px;-webkit-text-stroke:0.4px #111;">Jenny Hammond</span>
<div style="position:absolute;left:2349px;top:500px;width:19px;height:18.5px;background:#585858;border-radius:2px;"><svg style="position:absolute;left:5.5px;top:3.5px;" width="8" height="12" viewBox="0 0 8 12"><path d="M5.2,12v-5.4h1.8l.3,-2.1h-2.1v-1.3c0,-.6 .2,-1 1,-1h1.1v-1.9c-.2,0 -.8,-.1 -1.6,-.1c-1.6,0 -2.7,1 -2.7,2.800v1.5h-1.800v2.1h1.800v5.400z" fill="#fff"/></svg></div>
<div style="position:absolute;left:2374px;top:500px;width:19px;height:18.5px;background:#050505;border-radius:2px;"><svg style="position:absolute;left:4px;top:3.5px;" width="11" height="11" viewBox="0 0 11 11"><path d="M1,1l9,9.500M10,1l-9,9.500" stroke="#fff" stroke-width="1.5" fill="none"/></svg></div>
<div style="position:absolute;left:2399.5px;top:500px;width:19px;height:18.5px;background:#8a8a8a;border-radius:2px;"><svg style="position:absolute;left:4.5px;top:4px;" width="10" height="10" viewBox="0 0 10 10"><rect x="0.500" y="3.500" width="2" height="6" fill="#fff"/><rect x="0.500" y="0.500" width="2" height="2" fill="#fff"/><path d="M4,3.500h2v1c.8,-1.500 3.500,-1.500 3.500,1v4h-2v-3.500c0,-1 -1.500,-1 -1.500,0v3.500h-2z" fill="#fff"/></svg></div>
<svg style="position:absolute;left:2552px;top:280px;" width="171" height="140" viewBox="0 0 171 140"><defs><linearGradient id="p3g" x1="0" y1="0" x2="0" y2="1"><stop offset="0" stop-color="#e6e6e6"/><stop offset="0.100" stop-color="#e0e0e0"/><stop offset="0.160" stop-color="#b4b4b4"/><stop offset="0.240" stop-color="#b0b0b0"/><stop offset="0.320" stop-color="#c6c6c6"/><stop offset="1" stop-color="#cacaca"/></linearGradient><filter id="bl3" x="-10%" y="-10%" width="120%" height="120%"><feGaussianBlur stdDeviation="1.200"/></filter><filter id="bl3b"><feGaussianBlur stdDeviation="4"/></filter><clipPath id="c3"><rect width="171" height="140"/></clipPath></defs><g clip-path="url(#c3)"><rect width="171" height="140" fill="url(#p3g)"/><path d="M128,-4h48v40c-20,2 -36,-8 -48,-40z" fill="#a6a6a6" filter="url(#bl3b)"/><path d="M-4,100h30v44h-34z" fill="#dadada" filter="url(#bl3b)"/><g filter="url(#bl3)"><path d="M6,142c2,-14 8,-26 18,-34l16,-26c8,-3 16,-4 26,-3h54c8,2 30,10 40,16c8,4 12,10 16,18v30z" fill="#484848"/><path d="M70,84l10,34l10,24h22l6,-30l6,-30z" fill="#262626"/><path d="M80,104c4,8 14,10 24,4l-2,-22h-18z" fill="#b6b6b6"/><path d="M92,120l2,22M108,116l-4,26" stroke="#9a9a9a" stroke-width="1.200"/><path d="M40,82c6,2 10,8 12,18l8,42h-8l-6,-36c-2,-8 -6,-16 -6,-24z" fill="#353535"/><ellipse cx="94.500" cy="66" rx="25" ry="35" fill="#d0d0d0"/><ellipse cx="119" cy="62" rx="2.500" ry="6" fill="#b5b5b5"/><path d="M66,62c-6,-10 -10,-24 -6,-34c6,-12 18,-18 32,-18.500c14,0 24,8 28,18c3,8 2,16 0,22c-4,-8 -10,-12 -18,-14c-8,-4 -14,-10 -16,-6c-6,4 -10,10 -12,16c-3,6 -4,12 -4,20c-2,-1 -3,-2 -4,-3.500z" fill="#2c2c2c"/><path d="M74,55c4,-2.400 9,-2.400 13,-0.500M100,53c4,-2 8,-2 12,0" stroke="#3a3a3a" stroke-width="2.200" fill="none"/><path d="M89,69c3,2.500 8,2.500 12,0" stroke="#999" stroke-width="1.600" fill="none"/><path d="M83,74c8,3 19,2 28,-2c-2,9 -8,13 -15,13c-6,0 -11,-4 -13,-11z" fill="#555"/><path d="M85,75c7,2 16,1.500 24,-1.500c-2,5 -6,7.500 -12,7.500c-5,0 -9,-2 -12,-6z" fill="#f6f6f6"/></g></g></svg>
<span class="t" style="left:2552.0px;top:433.9px;font-size:10.30px;color:#3c3c3c;letter-spacing:0.13px;">CFO</span>
<div style="position:absolute;left:2552px;top:454.5px;width:171px;height:2px;background:#5c5c5c;"></div>
<span class="t" style="left:2552.0px;top:470.8px;font-size:16.72px;color:#111;letter-spacing:0.38px;-webkit-text-stroke:0.4px #111;">Nicole Smith</span>
<div style="position:absolute;left:2552px;top:500px;width:19px;height:18.5px;background:#585858;border-radius:2px;"><svg style="position:absolute;left:5.5px;top:3.5px;" width="8" height="12" viewBox="0 0 8 12"><path d="M5.2,12v-5.4h1.8l.3,-2.1h-2.1v-1.3c0,-.6 .2,-1 1,-1h1.1v-1.9c-.2,0 -.8,-.1 -1.6,-.1c-1.6,0 -2.7,1 -2.7,2.800v1.5h-1.800v2.1h1.800v5.400z" fill="#fff"/></svg></div>
<div style="position:absolute;left:2577px;top:500px;width:19px;height:18.5px;background:#050505;border-radius:2px;"><svg style="position:absolute;left:4px;top:3.5px;" width="11" height="11" viewBox="0 0 11 11"><path d="M1,1l9,9.500M10,1l-9,9.500" stroke="#fff" stroke-width="1.5" fill="none"/></svg></div>
<div style="position:absolute;left:2602.5px;top:500px;width:19px;height:18.5px;background:#8a8a8a;border-radius:2px;"><svg style="position:absolute;left:4.5px;top:4px;" width="10" height="10" viewBox="0 0 10 10"><rect x="0.500" y="3.500" width="2" height="6" fill="#fff"/><rect x="0.500" y="0.500" width="2" height="2" fill="#fff"/><path d="M4,3.500h2v1c.8,-1.500 3.500,-1.500 3.500,1v4h-2v-3.500c0,-1 -1.500,-1 -1.500,0v3.500h-2z" fill="#fff"/></svg></div>
<svg style="position:absolute;left:699.5px;top:1030.5px;" width="32" height="25" viewBox="0 0 32 25"><path d="M7.2,0.2c4.4,0 7.2,3 7.2,7.6c0,7.4 -5,13.6 -11.4,16.8l-1.6,-2.2c3.6,-2.4 5.8,-5.4 6.2,-8.6c-4,0.6 -7.4,-2.2 -7.4,-6.4c0,-4 3,-7.200 7,-7.200z" fill="#000"/><path d="M7.2,0.2c4.4,0 7.2,3 7.2,7.6c0,7.4 -5,13.6 -11.4,16.8l-1.6,-2.2c3.6,-2.4 5.8,-5.4 6.2,-8.6c-4,0.6 -7.4,-2.2 -7.4,-6.4c0,-4 3,-7.200 7,-7.200z" fill="#000" transform="translate(16.8,0)"/></svg>
<svg style="position:absolute;left:672.5px;top:1084px;" width="130" height="58" viewBox="0 0 130 58"><polygon points="28.5,0.5 36.6,18.8 56.6,20.9 41.7,34.3 45.8,53.9 28.5,43.9 11.2,53.9 15.3,34.3 0.4,20.9 20.4,18.8" fill="#000"/><polygon points="45.6,0.5 53.7,18.8 73.7,20.9 58.8,34.3 62.9,53.9 45.6,43.9 28.3,53.9 32.4,34.3 17.5,20.9 37.5,18.8" fill="#000"/><polygon points="62.7,0.5 70.8,18.8 90.8,20.9 75.9,34.3 80.0,53.9 62.7,43.9 45.4,53.9 49.5,34.3 34.6,20.9 54.6,18.8" fill="#000"/><polygon points="79.8,0.5 87.9,18.8 107.9,20.9 93.0,34.3 97.1,53.9 79.8,43.9 62.5,53.9 66.6,34.3 51.7,20.9 71.7,18.8" fill="#000"/><polygon points="96.9,0.5 105.0,18.8 125.0,20.9 110.1,34.3 114.2,53.9 96.9,43.9 79.6,53.9 83.7,34.3 68.8,20.9 88.8,18.8" fill="#000"/></svg>
<span class="t" style="left:660.5px;top:1152.7px;font-size:10.15px;color:#151515;letter-spacing:0.30px;-webkit-text-stroke:0.32px #151515;">Duis aute irure dolor in</span>
<span class="t" style="left:640.5px;top:1167.4px;font-size:10.27px;color:#151515;letter-spacing:0.37px;-webkit-text-stroke:0.32px #151515;">reprehenderit in voluptate velit</span>
<span class="t" style="left:635.0px;top:1181.7px;font-size:10.23px;color:#151515;letter-spacing:0.35px;-webkit-text-stroke:0.32px #151515;">esse cillum dolore eu fugiat nulla</span>
<span class="t" style="left:635.5px;top:1195.6px;font-size:10.31px;color:#151515;letter-spacing:0.42px;-webkit-text-stroke:0.32px #151515;">pariatur excepteur sint occaecat</span>
<span class="t" style="left:641.0px;top:1209.6px;font-size:10.33px;color:#151515;letter-spacing:0.43px;-webkit-text-stroke:0.32px #151515;">cupidatat non proident sunt in</span>
<span class="t" style="left:630.0px;top:1224.3px;font-size:10.29px;color:#151515;letter-spacing:0.40px;-webkit-text-stroke:0.32px #151515;">culpa qui officia deserunt laborum.</span>
<svg style="position:absolute;left:696px;top:1247.5px;" width="38" height="38" viewBox="0 0 38 38"><defs><clipPath id="av0"><circle cx="19" cy="19" r="18.500"/></clipPath></defs><g clip-path="url(#av0)"><circle cx="19" cy="19" r="19" fill="#c9c9c9"/><path d="M8,38c-2,-14 -2,-28 11,-30c13,2 13,16 11,30z" fill="#3a3a3a"/><ellipse cx="19" cy="18" rx="7" ry="9" fill="#cfcfcf"/><path d="M11,38c1,-6 4,-9 8,-9s7,3 8,9z" fill="#555"/></g><circle cx="19" cy="19" r="18.500" fill="none" stroke="#bbb" stroke-width="1"/></svg>
<span class="t" style="left:684.0px;top:1297.3px;font-size:13.77px;color:#2c2c2c;font-weight:700;letter-spacing:0.11px;">Jane Doe</span>
<span class="t" style="left:692.5px;top:1316.0px;font-size:9.00px;color:#222;font-style:italic;letter-spacing:0.86px;">Customer</span>
<svg style="position:absolute;left:902.5px;top:1030.5px;" width="32" height="25" viewBox="0 0 32 25"><path d="M7.2,0.2c4.4,0 7.2,3 7.2,7.6c0,7.4 -5,13.6 -11.4,16.8l-1.6,-2.2c3.6,-2.4 5.8,-5.4 6.2,-8.6c-4,0.6 -7.4,-2.2 -7.4,-6.4c0,-4 3,-7.200 7,-7.200z" fill="#000"/><path d="M7.2,0.2c4.4,0 7.2,3 7.2,7.6c0,7.4 -5,13.6 -11.4,16.8l-1.6,-2.2c3.6,-2.4 5.8,-5.4 6.2,-8.6c-4,0.6 -7.4,-2.2 -7.4,-6.4c0,-4 3,-7.200 7,-7.200z" fill="#000" transform="translate(16.8,0)"/></svg>
<svg style="position:absolute;left:875.5px;top:1084px;" width="130" height="58" viewBox="0 0 130 58"><polygon points="28.5,0.5 36.6,18.8 56.6,20.9 41.7,34.3 45.8,53.9 28.5,43.9 11.2,53.9 15.3,34.3 0.4,20.9 20.4,18.8" fill="#000"/><polygon points="45.6,0.5 53.7,18.8 73.7,20.9 58.8,34.3 62.9,53.9 45.6,43.9 28.3,53.9 32.4,34.3 17.5,20.9 37.5,18.8" fill="#000"/><polygon points="62.7,0.5 70.8,18.8 90.8,20.9 75.9,34.3 80.0,53.9 62.7,43.9 45.4,53.9 49.5,34.3 34.6,20.9 54.6,18.8" fill="#000"/><polygon points="79.8,0.5 87.9,18.8 107.9,20.9 93.0,34.3 97.1,53.9 79.8,43.9 62.5,53.9 66.6,34.3 51.7,20.9 71.7,18.8" fill="#000"/><polygon points="96.9,0.5 105.0,18.8 125.0,20.9 110.1,34.3 114.2,53.9 96.9,43.9 79.6,53.9 83.7,34.3 68.8,20.9 88.8,18.8" fill="#000"/></svg>
<span class="t" style="left:863.5px;top:1152.7px;font-size:10.15px;color:#151515;letter-spacing:0.30px;-webkit-text-stroke:0.32px #151515;">Duis aute irure dolor in</span>
<span class="t" style="left:843.5px;top:1167.4px;font-size:10.27px;color:#151515;letter-spacing:0.37px;-webkit-text-stroke:0.32px #151515;">reprehenderit in voluptate velit</span>
<span class="t" style="left:838.0px;top:1181.7px;font-size:10.23px;color:#151515;letter-spacing:0.35px;-webkit-text-stroke:0.32px #151515;">esse cillum dolore eu fugiat nulla</span>
<span class="t" style="left:838.5px;top:1195.6px;font-size:10.31px;color:#151515;letter-spacing:0.42px;-webkit-text-stroke:0.32px #151515;">pariatur excepteur sint occaecat</span>
<span class="t" style="left:844.0px;top:1209.6px;font-size:10.33px;color:#151515;letter-spacing:0.43px;-webkit-text-stroke:0.32px #151515;">cupidatat non proident sunt in</span>
<span class="t" style="left:833.0px;top:1224.3px;font-size:10.29px;color:#151515;letter-spacing:0.40px;-webkit-text-stroke:0.32px #151515;">culpa qui officia deserunt laborum.</span>
<svg style="position:absolute;left:899px;top:1247.5px;" width="38" height="38" viewBox="0 0 38 38"><defs><clipPath id="av1"><circle cx="19" cy="19" r="18.500"/></clipPath></defs><g clip-path="url(#av1)"><circle cx="19" cy="19" r="19" fill="#bdbdbd"/><ellipse cx="19" cy="16" rx="7.5" ry="9" fill="#d6d6d6"/><path d="M11,12c1,-6 15,-6 16,0c-4,-2 -12,-2 -16,0z" fill="#9a9a9a"/><path d="M5,38c1,-8 6,-12 14,-12s13,4 14,12z" fill="#2e2e2e"/><path d="M16,27l3,8l3,-8z" fill="#e8e8e8"/></g><circle cx="19" cy="19" r="18.500" fill="none" stroke="#bbb" stroke-width="1"/></svg>
<span class="t" style="left:887.0px;top:1297.4px;font-size:13.60px;color:#2c2c2c;font-weight:700;">John Doe</span>
<span class="t" style="left:895.5px;top:1316.0px;font-size:9.00px;color:#222;font-style:italic;letter-spacing:0.86px;">Customer</span>
<svg style="position:absolute;left:1106.0px;top:1030.5px;" width="32" height="25" viewBox="0 0 32 25"><path d="M7.2,0.2c4.4,0 7.2,3 7.2,7.6c0,7.4 -5,13.6 -11.4,16.8l-1.6,-2.2c3.6,-2.4 5.8,-5.4 6.2,-8.6c-4,0.6 -7.4,-2.2 -7.4,-6.4c0,-4 3,-7.200 7,-7.200z" fill="#000"/><path d="M7.2,0.2c4.4,0 7.2,3 7.2,7.6c0,7.4 -5,13.6 -11.4,16.8l-1.6,-2.2c3.6,-2.4 5.8,-5.4 6.2,-8.6c-4,0.6 -7.4,-2.2 -7.4,-6.4c0,-4 3,-7.200 7,-7.200z" fill="#000" transform="translate(16.8,0)"/></svg>
<svg style="position:absolute;left:1079.0px;top:1084px;" width="130" height="58" viewBox="0 0 130 58"><polygon points="28.5,0.5 36.6,18.8 56.6,20.9 41.7,34.3 45.8,53.9 28.5,43.9 11.2,53.9 15.3,34.3 0.4,20.9 20.4,18.8" fill="#000"/><polygon points="45.6,0.5 53.7,18.8 73.7,20.9 58.8,34.3 62.9,53.9 45.6,43.9 28.3,53.9 32.4,34.3 17.5,20.9 37.5,18.8" fill="#000"/><polygon points="62.7,0.5 70.8,18.8 90.8,20.9 75.9,34.3 80.0,53.9 62.7,43.9 45.4,53.9 49.5,34.3 34.6,20.9 54.6,18.8" fill="#000"/><polygon points="79.8,0.5 87.9,18.8 107.9,20.9 93.0,34.3 97.1,53.9 79.8,43.9 62.5,53.9 66.6,34.3 51.7,20.9 71.7,18.8" fill="#000"/><polygon points="96.9,0.5 105.0,18.8 125.0,20.9 110.1,34.3 114.2,53.9 96.9,43.9 79.6,53.9 83.7,34.3 68.8,20.9 88.8,18.8" fill="#000"/></svg>
<span class="t" style="left:1067.0px;top:1152.7px;font-size:10.15px;color:#151515;letter-spacing:0.30px;-webkit-text-stroke:0.32px #151515;">Duis aute irure dolor in</span>
<span class="t" style="left:1047.0px;top:1167.4px;font-size:10.27px;color:#151515;letter-spacing:0.37px;-webkit-text-stroke:0.32px #151515;">reprehenderit in voluptate velit</span>
<span class="t" style="left:1041.5px;top:1181.7px;font-size:10.23px;color:#151515;letter-spacing:0.35px;-webkit-text-stroke:0.32px #151515;">esse cillum dolore eu fugiat nulla</span>
<span class="t" style="left:1042.0px;top:1195.6px;font-size:10.31px;color:#151515;letter-spacing:0.42px;-webkit-text-stroke:0.32px #151515;">pariatur excepteur sint occaecat</span>
<span class="t" style="left:1047.5px;top:1209.6px;font-size:10.33px;color:#151515;letter-spacing:0.43px;-webkit-text-stroke:0.32px #151515;">cupidatat non proident sunt in</span>
<span class="t" style="left:1036.5px;top:1224.3px;font-size:10.29px;color:#151515;letter-spacing:0.40px;-webkit-text-stroke:0.32px #151515;">culpa qui officia deserunt laborum.</span>
<svg style="position:absolute;left:1102.5px;top:1247.5px;" width="38" height="38" viewBox="0 0 38 38"><defs><clipPath id="av2"><circle cx="19" cy="19" r="18.500"/></clipPath></defs><g clip-path="url(#av2)"><circle cx="19" cy="19" r="19" fill="#9c9c9c"/><ellipse cx="19" cy="17" rx="8" ry="9.500" fill="#8a8a8a"/><path d="M10,14c0,-9 18,-9 18,0c-5,-3 -13,-3 -18,0z" fill="#1c1c1c"/><path d="M12,20c2,8 12,8 14,0c0,9 -14,9 -14,0z" fill="#1c1c1c"/><path d="M4,38c1,-7 6,-10 15,-10s14,3 15,10z" fill="#2a2a2a"/></g><circle cx="19" cy="19" r="18.500" fill="none" stroke="#bbb" stroke-width="1"/></svg>
<span class="t" style="left:1080.5px;top:1297.2px;font-size:13.83px;color:#2c2c2c;font-weight:700;letter-spacing:0.13px;">Michael Doe</span>
<span class="t" style="left:1099.0px;top:1316.0px;font-size:9.00px;color:#222;font-style:italic;letter-spacing:0.86px;">Customer</span>
<div style="position:absolute;left:1388px;top:1011px;width:179px;height:273px;box-sizing:border-box;border:1.5px solid #a9a9a9;border-radius:11px;box-shadow:0 1px 4px rgba(0,0,0,.08);"></div>
<span class="t" style="left:1401.0px;top:1027.3px;font-size:15.87px;color:#2e2e2e;letter-spacing:1.25px;-webkit-text-stroke:0.3px #2e2e2e;">Premium</span>
<span class="t" style="left:1401.0px;top:1063.0px;font-size:22.00px;color:#222;font-weight:700;letter-spacing:-0.66px;">$19.99</span>
<span class="t" style="left:1465.5px;top:1068.6px;font-size:11.09px;color:#333;letter-spacing:0.82px;">/month</span>
<span class="t" style="left:1401.0px;top:1100.3px;font-size:12.35px;color:#111;font-weight:700;letter-spacing:0.43px;">Get Started »</span>
<div style="position:absolute;left:1400.5px;top:1128.8px;width:154.5px;height:1.8px;background:#9a9a9a;"></div>
<svg style="position:absolute;left:1409.5px;top:1155.5px;" width="13" height="13" viewBox="0 0 13 13"><circle cx="6.500" cy="6.500" r="6.300" fill="#0a0a0a"/><path d="M3.600,6.700l2.100,2.100l3.800,-4.200" fill="none" stroke="#fff" stroke-width="1.500"/></svg>
<span class="t" style="left:1428.5px;top:1155.5px;font-size:10.65px;color:#6a6a6a;font-weight:700;letter-spacing:0.30px;">10 GB SSD Storage</span>
<svg style="position:absolute;left:1409.5px;top:1177.5px;" width="13" height="13" viewBox="0 0 13 13"><circle cx="6.500" cy="6.500" r="6.300" fill="#0a0a0a"/><path d="M3.600,6.700l2.100,2.100l3.800,-4.200" fill="none" stroke="#fff" stroke-width="1.500"/></svg>
<span class="t" style="left:1428.5px;top:1177.3px;font-size:10.88px;color:#6a6a6a;font-weight:700;letter-spacing:0.51px;">10 MySQL Database</span>
<svg style="position:absolute;left:1409.5px;top:1199.3px;" width="13" height="13" viewBox="0 0 13 13"><circle cx="6.500" cy="6.500" r="6.300" fill="#0a0a0a"/><path d="M3.600,6.700l2.100,2.100l3.800,-4.200" fill="none" stroke="#fff" stroke-width="1.500"/></svg>
<span class="t" style="left:1428.5px;top:1198.9px;font-size:11.08px;color:#6a6a6a;font-weight:700;letter-spacing:0.63px;">Unlimited Website</span>
<svg style="position:absolute;left:1409.5px;top:1221.8px;" width="13" height="13" viewBox="0 0 13 13"><circle cx="6.500" cy="6.500" r="6.300" fill="#0a0a0a"/><path d="M3.600,6.700l2.100,2.100l3.800,-4.200" fill="none" stroke="#fff" stroke-width="1.500"/></svg>
<span class="t" style="left:1428.5px;top:1221.5px;font-size:10.98px;color:#6a6a6a;font-weight:700;letter-spacing:0.54px;">cPanel Control Panel</span>
<svg style="position:absolute;left:1409.5px;top:1244.3px;" width="13" height="13" viewBox="0 0 13 13"><circle cx="6.500" cy="6.500" r="6.300" fill="#0a0a0a"/><path d="M3.600,6.700l2.100,2.100l3.800,-4.200" fill="none" stroke="#fff" stroke-width="1.500"/></svg>
<span class="t" style="left:1428.5px;top:1243.9px;font-size:11.04px;color:#6a6a6a;font-weight:700;letter-spacing:0.63px;">Cloud Storage</span>
<div style="position:absolute;left:1587.5px;top:1011px;width:179px;height:273px;box-sizing:border-box;border:1.5px solid #a9a9a9;border-radius:11px;box-shadow:0 1px 4px rgba(0,0,0,.08);"></div>
<span class="t" style="left:1600.5px;top:1027.4px;font-size:15.74px;color:#2e2e2e;letter-spacing:0.69px;-webkit-text-stroke:0.3px #2e2e2e;">Enterprise</span>
<span class="t" style="left:1600.5px;top:1063.0px;font-size:22.00px;color:#222;font-weight:700;letter-spacing:-0.06px;">$29.99</span>
<span class="t" style="left:1668.0px;top:1068.6px;font-size:11.09px;color:#333;letter-spacing:0.82px;">/month</span>
<span class="t" style="left:1600.5px;top:1100.3px;font-size:12.35px;color:#111;font-weight:700;letter-spacing:0.43px;">Get Started »</span>
<div style="position:absolute;left:1600.0px;top:1128.8px;width:154.5px;height:1.8px;background:#9a9a9a;"></div>
<svg style="position:absolute;left:1609.0px;top:1155.5px;" width="13" height="13" viewBox="0 0 13 13"><circle cx="6.500" cy="6.500" r="6.300" fill="#0a0a0a"/><path d="M3.600,6.700l2.100,2.100l3.800,-4.200" fill="none" stroke="#fff" stroke-width="1.500"/></svg>
<span class="t" style="left:1628.0px;top:1155.5px;font-size:10.65px;color:#6a6a6a;font-weight:700;letter-spacing:0.30px;">10 GB SSD Storage</span>
<svg style="position:absolute;left:1609.0px;top:1177.5px;" width="13" height="13" viewBox="0 0 13 13"><circle cx="6.500" cy="6.500" r="6.300" fill="#0a0a0a"/><path d="M3.600,6.700l2.100,2.100l3.800,-4.200" fill="none" stroke="#fff" stroke-width="1.500"/></svg>
<span class="t" style="left:1628.0px;top:1177.3px;font-size:10.88px;color:#6a6a6a;font-weight:700;letter-spacing:0.51px;">10 MySQL Database</span>
<svg style="position:absolute;left:1609.0px;top:1199.3px;" width="13" height="13" viewBox="0 0 13 13"><circle cx="6.500" cy="6.500" r="6.300" fill="#0a0a0a"/><path d="M3.600,6.700l2.100,2.100l3.800,-4.200" fill="none" stroke="#fff" stroke-width="1.500"/></svg>
<span class="t" style="left:1628.0px;top:1198.9px;font-size:11.08px;color:#6a6a6a;font-weight:700;letter-spacing:0.63px;">Unlimited Website</span>
<svg style="position:absolute;left:1609.0px;top:1221.8px;" width="13" height="13" viewBox="0 0 13 13"><circle cx="6.500" cy="6.500" r="6.300" fill="#0a0a0a"/><path d="M3.600,6.700l2.100,2.100l3.800,-4.200" fill="none" stroke="#fff" stroke-width="1.500"/></svg>
<span class="t" style="left:1628.0px;top:1221.5px;font-size:10.98px;color:#6a6a6a;font-weight:700;letter-spacing:0.54px;">cPanel Control Panel</span>
<svg style="position:absolute;left:1609.0px;top:1244.3px;" width="13" height="13" viewBox="0 0 13 13"><circle cx="6.500" cy="6.500" r="6.300" fill="#0a0a0a"/><path d="M3.600,6.700l2.100,2.100l3.800,-4.200" fill="none" stroke="#fff" stroke-width="1.500"/></svg>
<span class="t" style="left:1628.0px;top:1243.9px;font-size:11.04px;color:#6a6a6a;font-weight:700;letter-spacing:0.63px;">Cloud Storage</span>
<div style="position:absolute;left:1786.5px;top:1011px;width:179px;height:273px;box-sizing:border-box;border:1.5px solid #a9a9a9;border-radius:11px;box-shadow:0 1px 4px rgba(0,0,0,.08);"></div>
<span class="t" style="left:1799.5px;top:1027.3px;font-size:15.92px;color:#2e2e2e;letter-spacing:1.17px;-webkit-text-stroke:0.3px #2e2e2e;">Dedicated</span>
<span class="t" style="left:1799.5px;top:1063.0px;font-size:22.00px;color:#222;font-weight:700;letter-spacing:0.14px;">$39.99</span>
<span class="t" style="left:1868.0px;top:1068.6px;font-size:11.09px;color:#333;letter-spacing:0.82px;">/month</span>
<span class="t" style="left:1799.5px;top:1100.3px;font-size:12.35px;color:#111;font-weight:700;letter-spacing:0.43px;">Get Started »</span>
<div style="position:absolute;left:1799.0px;top:1128.8px;width:154.5px;height:1.8px;background:#9a9a9a;"></div>
<svg style="position:absolute;left:1808.0px;top:1155.5px;" width="13" height="13" viewBox="0 0 13 13"><circle cx="6.500" cy="6.500" r="6.300" fill="#0a0a0a"/><path d="M3.600,6.700l2.100,2.100l3.800,-4.200" fill="none" stroke="#fff" stroke-width="1.500"/></svg>
<span class="t" style="left:1827.0px;top:1155.5px;font-size:10.65px;color:#6a6a6a;font-weight:700;letter-spacing:0.30px;">10 GB SSD Storage</span>
<svg style="position:absolute;left:1808.0px;top:1177.5px;" width="13" height="13" viewBox="0 0 13 13"><circle cx="6.500" cy="6.500" r="6.300" fill="#0a0a0a"/><path d="M3.600,6.700l2.100,2.100l3.800,-4.200" fill="none" stroke="#fff" stroke-width="1.500"/></svg>
<span class="t" style="left:1827.0px;top:1177.3px;font-size:10.88px;color:#6a6a6a;font-weight:700;letter-spacing:0.51px;">10 MySQL Database</span>
<svg style="position:absolute;left:1808.0px;top:1199.3px;" width="13" height="13" viewBox="0 0 13 13"><circle cx="6.500" cy="6.500" r="6.300" fill="#0a0a0a"/><path d="M3.600,6.700l2.100,2.100l3.800,-4.200" fill="none" stroke="#fff" stroke-width="1.500"/></svg>
<span class="t" style="left:1827.0px;top:1198.9px;font-size:11.08px;color:#6a6a6a;font-weight:700;letter-spacing:0.63px;">Unlimited Website</span>
<svg style="position:absolute;left:1808.0px;top:1221.8px;" width="13" height="13" viewBox="0 0 13 13"><circle cx="6.500" cy="6.500" r="6.300" fill="#0a0a0a"/><path d="M3.600,6.700l2.100,2.100l3.800,-4.200" fill="none" stroke="#fff" stroke-width="1.500"/></svg>
<span class="t" style="left:1827.0px;top:1221.5px;font-size:10.98px;color:#6a6a6a;font-weight:700;letter-spacing:0.54px;">cPanel Control Panel</span>
<svg style="position:absolute;left:1808.0px;top:1244.3px;" width="13" height="13" viewBox="0 0 13 13"><circle cx="6.500" cy="6.500" r="6.300" fill="#0a0a0a"/><path d="M3.600,6.700l2.100,2.100l3.800,-4.200" fill="none" stroke="#fff" stroke-width="1.500"/></svg>
<span class="t" style="left:1827.0px;top:1243.9px;font-size:11.04px;color:#6a6a6a;font-weight:700;letter-spacing:0.63px;">Cloud Storage</span>
<span class="t" style="left:2146.0px;top:1013.9px;font-size:9.00px;color:#2a2a2a;letter-spacing:1.00px;">DIVI 5</span>
<span class="t" style="left:2146.8px;top:1044.0px;font-size:42.30px;color:#2b2b2b;letter-spacing:2.70px;-webkit-text-stroke:1.0px #2b2b2b;">Creating Custom Resuable</span>
<span class="t" style="left:2146.8px;top:1095.0px;font-size:42.30px;color:#2b2b2b;letter-spacing:2.28px;-webkit-text-stroke:1.0px #2b2b2b;">Modules With Nested</span>
<span class="t" style="left:2146.8px;top:1145.0px;font-size:42.30px;color:#2b2b2b;letter-spacing:2.85px;-webkit-text-stroke:1.0px #2b2b2b;">Modules</span>
<div style="position:absolute;left:2146px;top:1212.5px;width:181px;height:29.5px;background:#000;"></div>
<div style="position:absolute;left:2344px;top:1212.5px;width:181px;height:29.5px;background:#000;"></div>
<span class="t" style="left:2241.7px;top:1222.4px;font-size:9.33px;color:#fff;letter-spacing:0.32px;">Discover More</span>
<span class="t" style="left:2408.5px;top:1222.3px;font-size:9.41px;color:#fff;letter-spacing:0.42px;">Watch a Demo Video</span>
<svg style="position:absolute;left:2312.5px;top:1222.8px;" width="9" height="9" viewBox="0 0 9 9"><circle cx="4.500" cy="4.500" r="4.200" fill="#fff"/><path d="M2,4.500h4.500M4.800,2.600l1.900,1.900l-1.900,1.900" fill="none" stroke="#000" stroke-width="1"/></svg>
<svg style="position:absolute;left:2511px;top:1222.8px;" width="9" height="9" viewBox="0 0 9 9"><circle cx="4.500" cy="4.500" r="4.200" fill="#fff"/><path d="M2,4.500h4.500M4.800,2.600l1.900,1.900l-1.900,1.900" fill="none" stroke="#000" stroke-width="1"/></svg>
<span class="t" style="left:2542.0px;top:1210.6px;font-size:8.69px;color:#7c7c7c;letter-spacing:0.46px;">Nested modules enhance organization</span>
<span class="t" style="left:2542.0px;top:1223.0px;font-size:8.72px;color:#7c7c7c;letter-spacing:0.43px;">and efficiency, optimizing your workflow</span>
<span class="t" style="left:2542.0px;top:1234.7px;font-size:8.65px;color:#7c7c7c;letter-spacing:0.43px;">and design.</span>
<!-- p_left -->
<div style="position:absolute;left:90px;top:91px;width:2px;height:1541px;background:#d2d3d6;"></div>
<div style="position:absolute;left:490px;top:91px;width:2px;height:1541px;background:#e0e1e3;"></div>
<div style="position:absolute;left:16px;top:112px;width:56px;height:56px;background:#4268f1;border-radius:5px;"><svg style="position:absolute;left:0px;top:0px;" width="56" height="56" viewBox="0 0 56 56"><path d="M28,17.500v21M17.500,28h21" stroke="#fff" stroke-width="4.400"/></svg></div>
<svg style="position:absolute;left:26px;top:196px;" width="38" height="40" viewBox="0 0 38 40"><path d="M18.500,3.500l14.500,9.500l-14.500,9.500l-14.500,-9.500z" fill="none" stroke="#4268f1" stroke-width="4" stroke-linejoin="round"/><path d="M4,22.500l14.500,10l14.500,-10" fill="none" stroke="#4268f1" stroke-width="4" stroke-linejoin="round" stroke-linecap="round"/></svg>
<svg style="position:absolute;left:26px;top:263px;" width="40" height="38" viewBox="0 0 40 38"><rect x="4" y="4" width="13" height="28" rx="6" fill="none" stroke="#a3a9bd" stroke-width="3.6"/><circle cx="10.5" cy="26" r="1.8" fill="#a3a9bd"/><path d="M17,22l8,-9l4.5,5.5c4,0 6,3 6,6.5c0,4 -3,7 -7,7h-14" fill="none" stroke="#a3a9bd" stroke-width="3.6" stroke-linejoin="round"/></svg>
<svg style="position:absolute;left:27px;top:330px;" width="36" height="38" viewBox="0 0 36 38"><ellipse cx="17" cy="9" rx="12.5" ry="5.5" fill="none" stroke="#a3a9bd" stroke-width="3.6"/><path d="M4.5,9v18c0,3 5.6,5.5 12.5,5.5s12.5,-2.5 12.5,-5.5v-18M4.5,18c0,3 5.6,5.5 12.5,5.5s12.5,-2.5 12.5,-5.5" fill="none" stroke="#a3a9bd" stroke-width="3.6"/></svg>
<svg style="position:absolute;left:28px;top:399px;" width="34" height="34" viewBox="0 0 34 34"><rect x="2" y="2.5" width="28" height="5.5" fill="#a3a9bd"/><rect x="2" y="13" width="12" height="5.5" fill="#a3a9bd"/><rect x="19" y="13" width="11" height="5.5" fill="#a3a9bd"/><rect x="2" y="23.5" width="6" height="5.5" fill="#a3a9bd"/><rect x="12" y="23.5" width="18" height="5.5" fill="#a3a9bd"/></svg>
<div style="position:absolute;left:16px;top:462px;width:54px;height:2px;background:#dcdde2;"></div>
<svg style="position:absolute;left:27px;top:492px;" width="36" height="44" viewBox="0 0 36 44"><circle cx="6" cy="5" r="2.6" fill="#4268f1"/><circle cx="14.5" cy="5" r="2.6" fill="#4268f1"/><circle cx="23" cy="5" r="2.6" fill="#4268f1"/><path d="M13,30.5h-8.5v-18h24v10" fill="none" stroke="#4268f1" stroke-width="4"/><g transform="translate(16,20)"><path d="M0,0l13,7l-5.5,1.8l3.5,6.2l-3.2,1.8l-3.5,-6.2l-4.3,4z" fill="#4268f1"/></g></svg>
<svg style="position:absolute;left:26px;top:556px;" width="38" height="46" viewBox="0 0 38 46"><circle cx="5" cy="5" r="2.6" fill="#4268f1"/><circle cx="13.5" cy="5" r="2.6" fill="#4268f1"/><circle cx="22" cy="5" r="2.6" fill="#4268f1"/><path d="M12,33h-8.5v-21h28.5v14" fill="none" stroke="#4268f1" stroke-width="4"/><path d="M14,27h-3v-7.5h13v3" fill="none" stroke="#4268f1" stroke-width="3.6"/><g transform="translate(17,23)"><path d="M0,0l13,7l-5.5,1.8l3.5,6.2l-3.2,1.8l-3.5,-6.2l-4.3,4z" fill="#4268f1"/></g></svg>
<svg style="position:absolute;left:28px;top:628px;" width="44" height="42" viewBox="0 0 44 42"><path d="M18,24h-14v-20h23v10M4,11h23M12,11v13" fill="none" stroke="#a3a9bd" stroke-width="3.6"/><ellipse cx="30" cy="28" rx="10" ry="7.5" fill="#fff" stroke="#a3a9bd" stroke-width="3.6"/><circle cx="30" cy="28" r="3" fill="#a3a9bd"/></svg>
<div style="position:absolute;left:16px;top:692px;width:54px;height:2px;background:#dcdde2;"></div>
<svg style="position:absolute;left:28px;top:726px;" width="34" height="34" viewBox="0 0 34 34"><path d="M4,4l24,24M29,5l-24,24" stroke="#a3a9bd" stroke-width="4.2" stroke-linecap="round"/><circle cx="6.5" cy="7" r="4" fill="#a3a9bd"/><circle cx="27" cy="26.5" r="3.6" fill="none" stroke="#a3a9bd" stroke-width="2.6"/></svg>
<span class="t" style="left:34.8px;top:792.5px;font-size:33.00px;color:#a3a9bd;">?</span>
<div style="position:absolute;left:96px;top:96px;width:459px;height:1036px;background:#fff;box-sizing:border-box;border:1.5px solid #d4d5d8;border-radius:5px;box-shadow:0 6px 44px rgba(0,0,0,.085),0 0 2px rgba(0,0,0,.10);"></div>
<div style="position:absolute;left:97px;top:186px;width:457px;height:2px;background:#e3e4e6;"></div>
<span class="t" style="left:130.6px;top:131.5px;font-size:23.70px;color:#1f2229;letter-spacing:1.03px;-webkit-text-stroke:0.75px #1f2229;">Canvas Settings</span>
<svg style="position:absolute;left:494px;top:127.5px;" width="26" height="26" viewBox="0 0 26 26"><path d="M3,3l19,19M22,3l-19,19" stroke="#16181d" stroke-width="3.8"/></svg>
<span class="t" style="left:131.0px;top:229.9px;font-size:24.60px;color:#5b6688;letter-spacing:0.16px;-webkit-text-stroke:0.25px #5b6688;">Canvas Name</span>
<div style="position:absolute;left:130px;top:275px;width:392px;height:55px;box-sizing:border-box;border:2px solid #dcdde0;border-radius:5px;background:#fff;"></div>
<span class="t" style="left:153.0px;top:289.8px;font-size:24.60px;color:#1f2229;letter-spacing:0.56px;-webkit-text-stroke:0.25px #1f2229;">Slide-In Menu</span>
<span class="t" style="left:131.0px;top:369.0px;font-size:24.60px;color:#5b6688;letter-spacing:0.24px;-webkit-text-stroke:0.25px #5b6688;">Make Global</span>
<div style="position:absolute;left:130px;top:414.5px;width:84px;height:43.5px;background:#4268f1;border-radius:22px;"></div>
<div style="position:absolute;left:173.5px;top:417px;width:38.5px;height:38.5px;background:#fff;border-radius:50%;"></div>
<span class="t" style="left:131.0px;top:496.1px;font-size:24.60px;color:#5b6688;letter-spacing:0.64px;-webkit-text-stroke:0.25px #5b6688;">Append To Main</span>
<span class="t" style="left:131.0px;top:529.5px;font-size:24.60px;color:#5b6688;letter-spacing:0.06px;-webkit-text-stroke:0.25px #5b6688;">Canvas</span>
<div style="position:absolute;left:130px;top:575.5px;width:392px;height:54.5px;box-sizing:border-box;border:2px solid #dcdde0;border-radius:5px;background:#fff;"></div>
<span class="t" style="left:153.0px;top:590.1px;font-size:24.60px;color:#1f2229;letter-spacing:0.72px;-webkit-text-stroke:0.25px #1f2229;">Append Above</span>
<svg style="position:absolute;left:482px;top:597px;" width="22" height="14" viewBox="0 0 22 14"><path d="M2,2h17l-8.5,10z" fill="#16181d"/></svg>
<div style="position:absolute;left:131px;top:1045px;width:184px;height:54px;background:#f2f2f3;border-radius:5px;"></div>
<span class="t" style="left:183.5px;top:1060.7px;font-size:23.70px;color:#1f2229;letter-spacing:1.24px;-webkit-text-stroke:0.75px #1f2229;">Cancel</span>
<div style="position:absolute;left:336px;top:1045px;width:186px;height:54px;background:#4268f1;border-radius:5px;"></div>
<span class="t" style="left:401.0px;top:1060.7px;font-size:23.70px;color:#fff;letter-spacing:0.66px;-webkit-text-stroke:0.75px #fff;">Save</span>
<!-- p_right -->
<div style="position:absolute;left:2870px;top:99px;width:9px;height:1027px;background:#25262e;border-radius:5px;"></div>
<div style="position:absolute;left:2886px;top:91px;width:556px;height:1541px;background:#fff;box-sizing:border-box;border-left:2px solid #dcdde0;"></div>
<span class="t" style="left:2921.0px;top:125.8px;font-size:23.70px;color:#1f2229;letter-spacing:0.84px;-webkit-text-stroke:0.75px #1f2229;">Page Settings</span>
<svg style="position:absolute;left:3386px;top:122px;" width="26" height="26" viewBox="0 0 26 26"><path d="M3,3l19,19M22,3l-19,19" stroke="#16181d" stroke-width="3.8"/></svg>
<span class="t" style="left:2922.9px;top:189.6px;font-size:23.70px;color:#3f5fd2;letter-spacing:1.25px;-webkit-text-stroke:0.65px #3f5fd2;">Content</span>
<span class="t" style="left:3055.4px;top:189.6px;font-size:23.70px;color:#5b6688;letter-spacing:1.04px;-webkit-text-stroke:0.65px #5b6688;">Design</span>
<span class="t" style="left:3176.2px;top:189.6px;font-size:23.70px;color:#5b6688;letter-spacing:1.51px;-webkit-text-stroke:0.65px #5b6688;">Advanced</span>
<div style="position:absolute;left:2888px;top:242px;width:554px;height:2px;background:#e1e2e5;"></div>
<div style="position:absolute;left:2902px;top:237px;width:133px;height:6px;background:#4268f1;"></div>
<svg style="position:absolute;left:2918px;top:280px;" width="20" height="14" viewBox="0 0 20 14"><path d="M2,2h15l-7.5,9.5z" fill="#3f5fd2"/></svg>
<span class="t" style="left:2953.0px;top:276.0px;font-size:23.70px;color:#3f5fd2;letter-spacing:0.35px;-webkit-text-stroke:0.7px #3f5fd2;">Page</span>
<div style="position:absolute;left:2921px;top:333px;width:493px;height:55px;box-sizing:border-box;border:2px solid #dcdde0;border-radius:5px;background:#fff;"></div>
<svg style="position:absolute;left:3003px;top:343px;" width="36" height="35" viewBox="0 0 36 35"><defs><linearGradient id="aig" x1="0" y1="0" x2="0.6" y2="1"><stop offset="0" stop-color="#3aa0f5"/><stop offset="1" stop-color="#3440e0"/></linearGradient></defs><rect width="36" height="35" rx="6" fill="url(#aig)"/></svg>
<span class="t" style="left:3011.5px;top:352.9px;font-size:19.00px;color:#fff;font-weight:700;">AI</span>
<span class="t" style="left:3050.0px;top:347.1px;font-size:24.60px;color:#1f2229;letter-spacing:0.42px;-webkit-text-stroke:0.25px #1f2229;">Generate Content With AI</span>
<span class="t" style="left:2921.0px;top:426.4px;font-size:24.60px;color:#5b6688;letter-spacing:0.29px;-webkit-text-stroke:0.25px #5b6688;">Page Title</span>
<div style="position:absolute;left:2921px;top:475px;width:493px;height:54px;box-sizing:border-box;border:2px solid #dcdde0;border-radius:5px;background:#fff;"></div>
<span class="t" style="left:2942.5px;top:490.4px;font-size:24.60px;color:#1f2229;letter-spacing:0.30px;-webkit-text-stroke:0.25px #1f2229;">Divi 5 Canvases</span>
<span class="t" style="left:2921.0px;top:568.9px;font-size:24.60px;color:#5b6688;letter-spacing:0.60px;-webkit-text-stroke:0.25px #5b6688;">Excerpt</span>
<div style="position:absolute;left:2921px;top:617px;width:493px;height:237px;box-sizing:border-box;border:2px solid #dcdde0;border-radius:5px;background:#fff;"></div>
<svg style="position:absolute;left:3394px;top:834px;" width="18" height="18" viewBox="0 0 18 18"><path d="M3,15l12,-12M9,15l6,-6" stroke="#555" stroke-width="1.4"/></svg>
<span class="t" style="left:2921.0px;top:893.9px;font-size:24.60px;color:#5b6688;letter-spacing:0.26px;-webkit-text-stroke:0.25px #5b6688;">Featured Image</span>
<div style="position:absolute;left:2921px;top:943px;width:493px;height:318px;box-sizing:border-box;border:2px solid #dcdde0;border-radius:5px;background:#fff;"></div>
<svg style="position:absolute;left:3087px;top:1090px;" width="24" height="24" viewBox="0 0 24 24"><path d="M12,2v20M2,12h20" stroke="#a3a9bd" stroke-width="3"/></svg>
<span class="t" style="left:3128.5px;top:1088.9px;font-size:24.60px;color:#5b6688;letter-spacing:0.38px;-webkit-text-stroke:0.25px #5b6688;">Add Image</span>
<div style="position:absolute;left:2888px;top:1294px;width:554px;height:2px;background:#e1e2e5;"></div>
<svg style="position:absolute;left:2918px;top:1328px;" width="16" height="22" viewBox="0 0 16 22"><path d="M2,2v17l10,-8.5z" fill="#16181d"/></svg>
<span class="t" style="left:2952.0px;top:1327.5px;font-size:23.70px;color:#1f2229;letter-spacing:1.39px;-webkit-text-stroke:0.75px #1f2229;">Background</span>
<div style="position:absolute;left:2888px;top:1383px;width:554px;height:2px;background:#e1e2e5;"></div>
<div style="position:absolute;left:2924px;top:1422px;width:32px;height:32px;background:#9ca3c0;border-radius:50%;"></div>
<span class="t" style="left:2932.7px;top:1426.6px;font-size:24.00px;color:#fff;font-weight:700;">?</span>
<div style="position:absolute;left:2892px;top:1626px;width:560px;height:12px;background:#4268f1;border-radius:5px 0 0 0;"></div>
<!-- p_arrow -->
<svg style="position:absolute;left:300px;top:600px;" width="280" height="400" viewBox="0 0 280 400"><g fill="none" stroke="#e05a52" stroke-linecap="round" stroke-linejoin="round"><path d="M255,375L45,33" stroke-width="13"/><path d="M27,62L37,23L75,33" stroke-width="14"/></g></svg>
</body></html>
